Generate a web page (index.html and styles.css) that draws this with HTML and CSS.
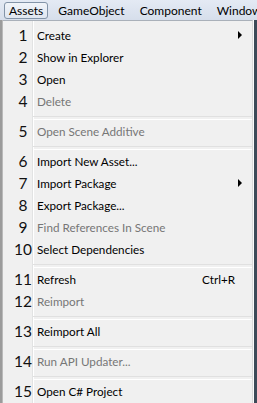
FILE: index.html
```html
<!DOCTYPE html>
<html lang="en">
<head>
    <meta charset="UTF-8">
    <title>Assets menu</title>
    <link rel="stylesheet" href="styles.css">
</head>
<body>
<div class="bar">
    <span class="bar-item active">Assets</span>
    <span class="bar-item">GameObject</span>
    <span class="bar-item">Component</span>
    <span class="bar-item">Window</span>
</div>
<div class="frame">
    <div class="side-left"></div>
    <ul class="menu">
        <li class="item"><b>1</b><span>Create</span><em class="arrow"></em></li>
        <li class="item"><b>2</b><span>Show in Explorer</span></li>
        <li class="item"><b>3</b><span>Open</span></li>
        <li class="item off"><b>4</b><span>Delete</span></li>
        <li class="sep"></li>
        <li class="item off"><b>5</b><span>Open Scene Additive</span></li>
        <li class="sep"></li>
        <li class="item"><b>6</b><span>Import New Asset...</span></li>
        <li class="item"><b>7</b><span>Import Package</span><em class="arrow"></em></li>
        <li class="item"><b>8</b><span>Export Package...</span></li>
        <li class="item off"><b>9</b><span>Find References In Scene</span></li>
        <li class="item"><b>10</b><span>Select Dependencies</span></li>
        <li class="sep"></li>
        <li class="item"><b>11</b><span>Refresh</span><i>Ctrl+R</i></li>
        <li class="item off"><b>12</b><span>Reimport</span></li>
        <li class="sep"></li>
        <li class="item"><b>13</b><span>Reimport All</span></li>
        <li class="sep"></li>
        <li class="item off"><b>14</b><span>Run API Updater...</span></li>
        <li class="sep"></li>
        <li class="item"><b>15</b><span>Open C# Project</span></li>
    </ul>
    <div class="side-right"></div>
</div>
</body>
</html>
```

FILE: styles.css
```css
*{
    margin: 0;
    padding: 0;
    box-sizing: border-box;
}

html,body{
    width: 257px;
    height: 403px;
    overflow: hidden;
    background: #f0f0f0;
}

body{
    font-family: Lato, "Noto Sans", sans-serif;
    font-size: 11.7px;
    color: #000;
}

/* menu bar */
.bar{
    display: flex;
    align-items: center;
    height: 20px;
    padding-left: 4px;
    overflow: hidden;
    background: linear-gradient(#e4eaf4, #d6deeb);
    white-space: nowrap;
}
.bar-item{
    flex-shrink: 0;
    height: 17px;
    line-height: 15px;
    padding: 0 4px;
    margin-right: 5px;
    font-size: 12px;
    border: 1px solid transparent;
}
.bar-item.active{
    border-color: #8394a8;
    border-radius: 3px;
    background: linear-gradient(#f1f4f9, #dfe6f0);
}

/* popup */
.frame{
    display: flex;
    height: 383px;
}
.side-left{
    width: 3px;
    background: #9b9b9b;
    border-right: 1px solid #b9b9b9;
}
.side-right{
    width: 4px;
    background: #3c4a58;
    border-left: 1px solid #fafafa;
}
.menu{
    flex: 1;
    list-style: none;
    padding-top: 3px;
    border-top: 1px solid #a9b0b9;
    border-right: 1px solid #d9d9d9;
    background: linear-gradient(to right, #f0f0f0 29px, #e2e3e3 29px, #e2e3e3 30px, #fff 30px, #fff 31px, #f0f0f0 31px);
}
.item{
    display: flex;
    align-items: center;
    height: 22px;
    white-space: nowrap;
}
.item b{
    width: 34px;
    padding-left: 6px;
    text-align: center;
    font-weight: normal;
    font-size: 15.5px;
    color: #111;
}
.item span{
    flex: 1;
}
.item i{
    font-style: normal;
    margin-right: 17px;
}
.item.off span{
    color: #767676;
}
.arrow{
    width: 0;
    height: 0;
    margin-right: 10px;
    border-top: 4px solid transparent;
    border-bottom: 4px solid transparent;
    border-left: 4px solid #000;
}
.sep{
    height: 8px;
    margin-left: 30px;
    padding-top: 4px;
}
.sep:after{
    content: "";
    display: block;
    height: 2px;
    border-top: 1px solid #e0e0e0;
    border-bottom: 1px solid #fff;
}
```
